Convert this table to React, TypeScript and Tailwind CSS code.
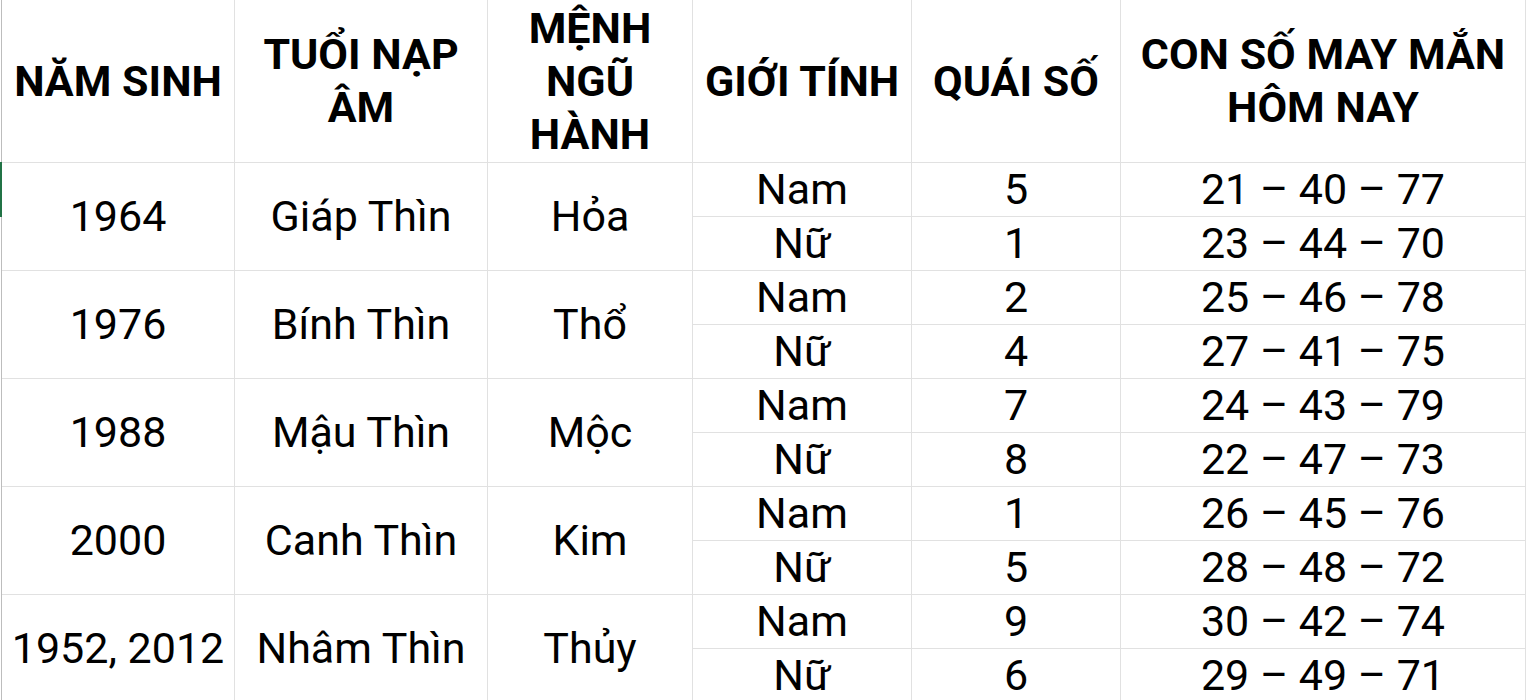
const groups = [
  {
    year: "1964",
    tuoi: "Giáp Thìn",
    menh: "Hỏa",
    rows: [
      { gender: "Nam", quai: "5", lucky: "21 – 40 – 77" },
      { gender: "Nữ", quai: "1", lucky: "23 – 44 – 70" },
    ],
  },
  {
    year: "1976",
    tuoi: "Bính Thìn",
    menh: "Thổ",
    rows: [
      { gender: "Nam", quai: "2", lucky: "25 – 46 – 78" },
      { gender: "Nữ", quai: "4", lucky: "27 – 41 – 75" },
    ],
  },
  {
    year: "1988",
    tuoi: "Mậu Thìn",
    menh: "Mộc",
    rows: [
      { gender: "Nam", quai: "7", lucky: "24 – 43 – 79" },
      { gender: "Nữ", quai: "8", lucky: "22 – 47 – 73" },
    ],
  },
  {
    year: "2000",
    tuoi: "Canh Thìn",
    menh: "Kim",
    rows: [
      { gender: "Nam", quai: "1", lucky: "26 – 45 – 76" },
      { gender: "Nữ", quai: "5", lucky: "28 – 48 – 72" },
    ],
  },
  {
    year: "1952, 2012",
    tuoi: "Nhâm Thìn",
    menh: "Thủy",
    rows: [
      { gender: "Nam", quai: "9", lucky: "30 – 42 – 74" },
      { gender: "Nữ", quai: "6", lucky: "29 – 49 – 71" },
    ],
  },
];

const cell =
  "flex items-center justify-center text-center border-r border-b border-[#e1e1e1] whitespace-nowrap overflow-hidden";

function Head({ children }: { children: React.ReactNode }) {
  return <div className={`${cell} font-bold leading-[53px] whitespace-normal`}>{children}</div>;
}

export default function App() {
  return (
    <div className="relative h-[700px] w-[1526px] overflow-hidden bg-white text-black">
      <div className="absolute left-0 top-[162px] h-[55px] w-[2px] bg-[#217346]" />
      <div
        className="ml-px grid grid-cols-[233px_253px_205px_219px_209px_405px] grid-rows-[163px_repeat(10,54px)] border-l border-[#bdbdbd] text-[43px]"
        style={{ fontFamily: "Roboto, 'Liberation Sans', sans-serif" }}
      >
        <Head>NĂM SINH</Head>
        <Head>
          TUỔI NẠP
          <br />
          ÂM
        </Head>
        <Head>
          MỆNH
          <br />
          NGŨ
          <br />
          HÀNH
        </Head>
        <Head>GIỚI TÍNH</Head>
        <Head>QUÁI SỐ</Head>
        <Head>
          CON SỐ MAY MẮN
          <br />
          HÔM NAY
        </Head>

        {groups.map((g) => (
          <>
            <div key={g.year + "y"} className={`${cell} row-span-2`}>{g.year}</div>
            <div key={g.year + "t"} className={`${cell} row-span-2`}>{g.tuoi}</div>
            <div key={g.year + "m"} className={`${cell} row-span-2`}>{g.menh}</div>
            {g.rows.map((r, i) => (
              <>
                <div key={g.year + i + "g"} className={`${cell} ${i === 1 ? "col-start-4" : ""}`}>
                  {r.gender}
                </div>
                <div key={g.year + i + "q"} className={cell}>{r.quai}</div>
                <div key={g.year + i + "l"} className={cell}>{r.lucky}</div>
              </>
            ))}
          </>
        ))}
      </div>
    </div>
  );
}
